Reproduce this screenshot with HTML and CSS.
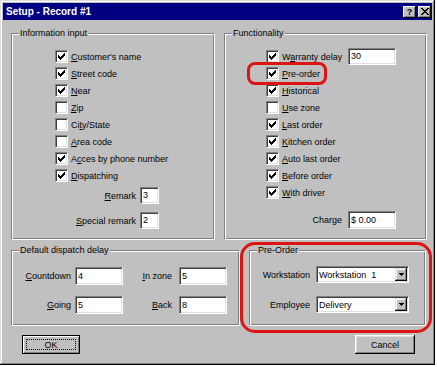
FILE: index.html
```html
<!DOCTYPE html>
<html>
<head>
<meta charset="utf-8">
<link rel="stylesheet" href="styles.css">
</head>
<body>
<div class="window">
  <div class="titlebar">
    <span class="title">Setup - Record #1</span>
    <span class="tbtn help">?</span>
    <span class="tbtn close"><svg width="8" height="7" viewBox="0 0 8 7"><path d="M0 0h2v1h-2zM6 0h2v1h-2zM1 1h2v1h-2zM5 1h2v1h-2zM2 2h4v1h-4zM3 3h2v1h-2zM2 4h4v1h-4zM1 5h2v1h-2zM5 5h2v1h-2zM0 6h2v1h-2zM6 6h2v1h-2z" fill="#000" shape-rendering="crispEdges"/></svg></span>
  </div>
  <div class="content">
    <div class="toprow">
      <div class="group info">
        <span class="legend">Information input</span>
        <div class="list">
          <div class="row"><span class="cb on"><svg class="ck" width="7" height="7" viewBox="0 0 7 7"><path d="M6 0h1v1h-1zM5 1h2v1h-2zM0 2h1v1h-1zM4 2h3v1h-3zM0 3h2v1h-2zM3 3h3v1h-3zM0 4h5v1h-5zM1 5h3v1h-3zM2 6h1v1h-1z"/></svg></span><span><u>C</u>ustomer's name</span></div>
          <div class="row"><span class="cb on"><svg class="ck" width="7" height="7" viewBox="0 0 7 7"><path d="M6 0h1v1h-1zM5 1h2v1h-2zM0 2h1v1h-1zM4 2h3v1h-3zM0 3h2v1h-2zM3 3h3v1h-3zM0 4h5v1h-5zM1 5h3v1h-3zM2 6h1v1h-1z"/></svg></span><span><u>S</u>treet code</span></div>
          <div class="row"><span class="cb on"><svg class="ck" width="7" height="7" viewBox="0 0 7 7"><path d="M6 0h1v1h-1zM5 1h2v1h-2zM0 2h1v1h-1zM4 2h3v1h-3zM0 3h2v1h-2zM3 3h3v1h-3zM0 4h5v1h-5zM1 5h3v1h-3zM2 6h1v1h-1z"/></svg></span><span><u>N</u>ear</span></div>
          <div class="row"><span class="cb"></span><span><u>Z</u>ip</span></div>
          <div class="row"><span class="cb"></span><span>Ci<u>t</u>y/State</span></div>
          <div class="row"><span class="cb"></span><span><u>A</u>rea code</span></div>
          <div class="row"><span class="cb on"><svg class="ck" width="7" height="7" viewBox="0 0 7 7"><path d="M6 0h1v1h-1zM5 1h2v1h-2zM0 2h1v1h-1zM4 2h3v1h-3zM0 3h2v1h-2zM3 3h3v1h-3zM0 4h5v1h-5zM1 5h3v1h-3zM2 6h1v1h-1z"/></svg></span><span>A<u>c</u>ces by phone number</span></div>
          <div class="row"><span class="cb on"><svg class="ck" width="7" height="7" viewBox="0 0 7 7"><path d="M6 0h1v1h-1zM5 1h2v1h-2zM0 2h1v1h-1zM4 2h3v1h-3zM0 3h2v1h-2zM3 3h3v1h-3zM0 4h5v1h-5zM1 5h3v1h-3zM2 6h1v1h-1z"/></svg></span><span><u>D</u>ispatching</span></div>
          <div class="pair first"><span class="plabel"><u>R</u>emark</span><span class="field tiny">3</span></div>
          <div class="pair"><span class="plabel"><u>S</u>pecial remark</span><span class="field tiny">2</span></div>
        </div>
      </div>
      <div class="group func">
        <span class="legend">Functionality</span>
        <div class="list">
          <div class="row"><span class="fcheck"><span class="cb on"><svg class="ck" width="7" height="7" viewBox="0 0 7 7"><path d="M6 0h1v1h-1zM5 1h2v1h-2zM0 2h1v1h-1zM4 2h3v1h-3zM0 3h2v1h-2zM3 3h3v1h-3zM0 4h5v1h-5zM1 5h3v1h-3zM2 6h1v1h-1z"/></svg></span><span>W<u>a</u>rranty delay</span></span><span class="field wide">30</span></div>
          <div class="row"><span class="cb on"><svg class="ck" width="7" height="7" viewBox="0 0 7 7"><path d="M6 0h1v1h-1zM5 1h2v1h-2zM0 2h1v1h-1zM4 2h3v1h-3zM0 3h2v1h-2zM3 3h3v1h-3zM0 4h5v1h-5zM1 5h3v1h-3zM2 6h1v1h-1z"/></svg></span><span><u>P</u>re-order</span></div>
          <div class="row"><span class="cb on"><svg class="ck" width="7" height="7" viewBox="0 0 7 7"><path d="M6 0h1v1h-1zM5 1h2v1h-2zM0 2h1v1h-1zM4 2h3v1h-3zM0 3h2v1h-2zM3 3h3v1h-3zM0 4h5v1h-5zM1 5h3v1h-3zM2 6h1v1h-1z"/></svg></span><span><u>H</u>istorical</span></div>
          <div class="row"><span class="cb"></span><span><u>U</u>se zone</span></div>
          <div class="row"><span class="cb on"><svg class="ck" width="7" height="7" viewBox="0 0 7 7"><path d="M6 0h1v1h-1zM5 1h2v1h-2zM0 2h1v1h-1zM4 2h3v1h-3zM0 3h2v1h-2zM3 3h3v1h-3zM0 4h5v1h-5zM1 5h3v1h-3zM2 6h1v1h-1z"/></svg></span><span><u>L</u>ast order</span></div>
          <div class="row"><span class="cb on"><svg class="ck" width="7" height="7" viewBox="0 0 7 7"><path d="M6 0h1v1h-1zM5 1h2v1h-2zM0 2h1v1h-1zM4 2h3v1h-3zM0 3h2v1h-2zM3 3h3v1h-3zM0 4h5v1h-5zM1 5h3v1h-3zM2 6h1v1h-1z"/></svg></span><span><u>K</u>itchen order</span></div>
          <div class="row"><span class="cb on"><svg class="ck" width="7" height="7" viewBox="0 0 7 7"><path d="M6 0h1v1h-1zM5 1h2v1h-2zM0 2h1v1h-1zM4 2h3v1h-3zM0 3h2v1h-2zM3 3h3v1h-3zM0 4h5v1h-5zM1 5h3v1h-3zM2 6h1v1h-1z"/></svg></span><span><u>A</u>uto last order</span></div>
          <div class="row"><span class="cb on"><svg class="ck" width="7" height="7" viewBox="0 0 7 7"><path d="M6 0h1v1h-1zM5 1h2v1h-2zM0 2h1v1h-1zM4 2h3v1h-3zM0 3h2v1h-2zM3 3h3v1h-3zM0 4h5v1h-5zM1 5h3v1h-3zM2 6h1v1h-1z"/></svg></span><span><u>B</u>efore order</span></div>
          <div class="row"><span class="cb on"><svg class="ck" width="7" height="7" viewBox="0 0 7 7"><path d="M6 0h1v1h-1zM5 1h2v1h-2zM0 2h1v1h-1zM4 2h3v1h-3zM0 3h2v1h-2zM3 3h3v1h-3zM0 4h5v1h-5zM1 5h3v1h-3zM2 6h1v1h-1z"/></svg></span><span><u>W</u>ith driver</span></div>
          <div class="pair charge"><span class="plabel">Charge</span><span class="field wide tall">$ 0.00</span></div>
        </div>
      </div>
    </div>
    <div class="bottomrow">
      <div class="group dispatch">
        <span class="legend">Default dispatch delay</span>
        <div class="dgrid">
          <span class="dlabel"><u>C</u>ountdown</span><span class="field wide tall">4</span>
          <span class="dlabel second"><u>I</u>n zone</span><span class="field wide tall">5</span>
          <span class="dlabel"><u>G</u>oing</span><span class="field wide tall">5</span>
          <span class="dlabel second"><u>B</u>ack</span><span class="field wide tall">8</span>
        </div>
      </div>
      <div class="group preorder">
        <span class="legend">Pre-Order</span>
        <div class="prow"><span class="prlabel">Workstation</span><span class="select"><span class="seltext">Workstation&nbsp; 1</span><span class="ddbtn"><svg width="5" height="3" viewBox="0 0 5 3"><path d="M0 0h5v1h-5zM1 1h3v1h-3zM2 2h1v1h-1z" fill="#000" shape-rendering="crispEdges"/></svg></span></span></div>
        <div class="prow"><span class="prlabel">Employee</span><span class="select"><span class="seltext">Delivery</span><span class="ddbtn"><svg width="5" height="3" viewBox="0 0 5 3"><path d="M0 0h5v1h-5zM1 1h3v1h-3zM2 2h1v1h-1z" fill="#000" shape-rendering="crispEdges"/></svg></span></span></div>
      </div>
    </div>
    <div class="buttons">
      <span class="btn default"><span class="focus">OK</span></span>
      <span class="btn cancel">Cancel</span>
    </div>
  </div>
  <div class="mark mark-preorder"></div>
  <div class="mark mark-group"></div>
</div>
</body>
</html>
```
FILE: styles.css
```css
body {
  margin: 0;
  background: #ffffff;
  font-family: "Liberation Sans", Arial, sans-serif;
  font-size: 9px;
  color: #000;
}

.window {
  position: relative;
  width: 435px;
  height: 365px;
  box-sizing: border-box;
  padding: 3px;
  background: #c0c0c0;
  box-shadow: inset -1px -1px #000, inset 1px 1px #dfdfdf, inset -2px -2px #808080, inset 2px 2px #fff;
}

.titlebar {
  height: 17px;
  background: #000080;
  display: flex;
  align-items: center;
  padding: 0 1px 0 3px;
}

.title {
  flex: 1;
  color: #fff;
  font-weight: bold;
  font-size: 10px;
}

.tbtn {
  width: 13px;
  height: 12px;
  box-sizing: border-box;
  background: #c0c0c0;
  box-shadow: inset -1px -1px #000, inset 1px 1px #fff, inset -2px -2px #808080;
  display: flex;
  align-items: center;
  justify-content: center;
  font-weight: bold;
  font-size: 9px;
  line-height: 12px;
}

.tbtn.close {
  margin-left: 2px;
}

.content {
  padding: 13px 5px 0 8px;
}

.toprow {
  display: flex;
  gap: 9px;
  height: 207px;
}

.group {
  position: relative;
  box-sizing: border-box;
  border: 1px solid;
  border-color: #808080 #fff #fff #808080;
  box-shadow: inset 1px 1px #fff, inset -1px -1px #808080;
}

.legend {
  position: absolute;
  top: -7px;
  left: 7px;
  padding: 0 1px;
  background: #c0c0c0;
  line-height: 12px;
}

.info { width: 204px; }
.func { width: 203px; }

.list {
  padding: 14px 0 0 43px;
}

.func .list {
  padding-left: 41px;
}

.row {
  display: flex;
  align-items: center;
  height: 17px;
}

.cb {
  width: 13px;
  height: 13px;
  box-sizing: border-box;
  flex: none;
  background: #fff;
  border: 1px solid;
  border-color: #808080 #fff #fff #808080;
  box-shadow: inset 1px 1px #404040, inset -1px -1px #dfdfdf;
  display: flex;
  align-items: center;
  justify-content: center;
  margin-right: 3px;
}

.ck {
  fill: #000;
  shape-rendering: crispEdges;
}

.fcheck {
  display: flex;
  align-items: center;
  width: 82px;
}

.field {
  box-sizing: border-box;
  height: 17px;
  background: #fff;
  border: 1px solid;
  border-color: #808080 #fff #fff #808080;
  box-shadow: inset 1px 1px #404040, inset -1px -1px #dfdfdf;
  padding-left: 2px;
  line-height: 15px;
  display: block;
}

.field.tiny { width: 19px; }
.field.wide { width: 48px; }
.field.tall { height: 18px; line-height: 16px; }

.pair {
  display: flex;
  align-items: center;
  margin-top: 8px;
}

.pair.first { margin-top: 3px; }

.plabel {
  width: 81px;
  text-align: right;
  margin-right: 4px;
}

.pair.charge {
  margin-top: 10px;
}

.pair.charge .plabel {
  width: 76px;
  margin-right: 6px;
}

.bottomrow {
  display: flex;
  gap: 9px;
  margin-top: 10px;
  height: 76px;
}

.dispatch { width: 229px; }
.preorder { width: 177px; }

.dgrid {
  display: grid;
  grid-template-columns: 60px 48px 50px 48px;
  grid-auto-rows: 18px;
  column-gap: 3px;
  row-gap: 11px;
  padding-top: 16px;
  align-items: center;
}

.dlabel {
  text-align: right;
  padding-right: 1px;
}

.dlabel.second {
  padding-right: 4px;
}

.preorder {
  padding-top: 15px;
}

.prow {
  display: flex;
  align-items: center;
  height: 17px;
}

.prow + .prow {
  margin-top: 13px;
}

.prlabel {
  width: 60px;
  text-align: right;
  margin-right: 6px;
}

.select {
  box-sizing: border-box;
  width: 93px;
  height: 17px;
  background: #fff;
  border: 1px solid;
  border-color: #808080 #fff #fff #808080;
  box-shadow: inset 1px 1px #404040, inset -1px -1px #dfdfdf;
  display: flex;
  align-items: center;
  padding: 1px 1px 1px 2px;
}

.seltext {
  flex: 1;
}

.ddbtn {
  width: 12px;
  height: 13px;
  box-sizing: border-box;
  background: #c0c0c0;
  box-shadow: inset -1px -1px #000, inset 1px 1px #dfdfdf, inset -2px -2px #808080, inset 2px 2px #fff;
  display: flex;
  align-items: center;
  justify-content: center;
}

.buttons {
  display: flex;
  justify-content: space-between;
  margin-top: 9px;
  padding: 0 12px 0 11px;
}

.btn {
  box-sizing: border-box;
  height: 19px;
  background: #c0c0c0;
  display: flex;
  align-items: center;
  justify-content: center;
}

.btn.default {
  width: 58px;
  border: 1px solid #000;
  box-shadow: inset 1px 1px #fff, inset -1px -1px #808080;
  padding: 3px;
}

.focus {
  flex: 1;
  align-self: stretch;
  border: 1px dotted #000;
  display: flex;
  align-items: center;
  justify-content: center;
}

.btn.cancel {
  width: 60px;
  box-shadow: inset -1px -1px #000, inset 1px 1px #fff, inset -2px -2px #808080, inset 2px 2px #dfdfdf;
}

.mark {
  position: absolute;
  box-sizing: border-box;
  border: 3px solid #dc1414;
}

.mark-preorder {
  left: 247px;
  top: 62px;
  width: 80px;
  height: 23px;
  border-radius: 8px;
}

.mark-group {
  left: 240px;
  top: 242px;
  width: 192px;
  height: 91px;
  border-radius: 15px;
}
```
